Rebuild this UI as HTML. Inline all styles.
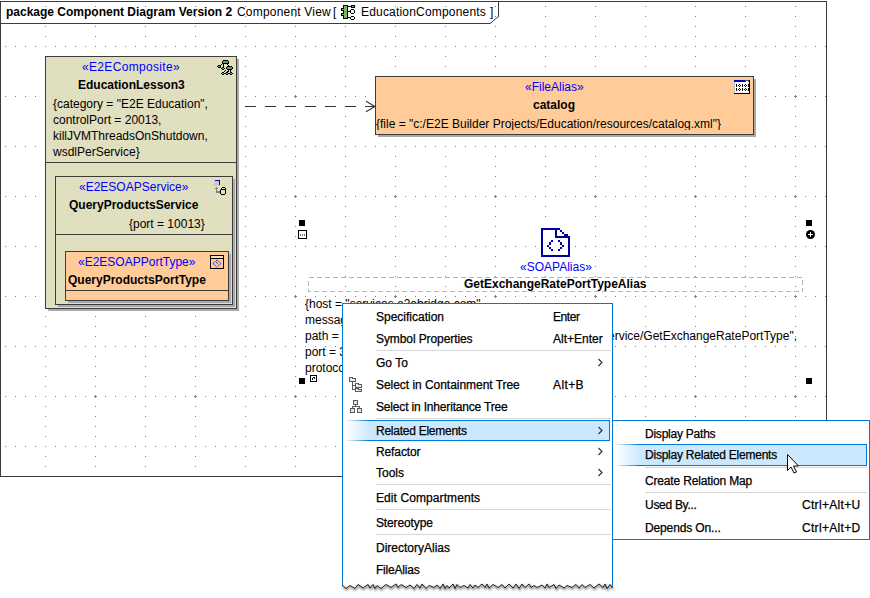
<!DOCTYPE html>
<html><head><meta charset="utf-8">
<style>
*{margin:0;padding:0;box-sizing:border-box}
html,body{width:870px;height:598px;overflow:hidden;background:#fff}
body{position:relative;font-family:"Liberation Sans",sans-serif;font-size:12px;color:#000}
.a{position:absolute}
.t{position:absolute;white-space:pre;line-height:16px;font-size:12px}
.b{font-weight:bold}
.st{color:#0000ff}
.sta{color:#0000ff}
.box{position:absolute;border:1px solid #3c3c3c}
.sh{position:absolute;background:#aaaaaa}
.beige{background:#e0dfbf}
.org{background:#ffcc99}
.hs{position:absolute;width:6px;height:6px;background:#000}
.menu{position:absolute;background:#fff;border:1px solid #0078d7}
.mi{position:absolute;white-space:pre;font-size:12px;line-height:16px;color:#000;-webkit-text-stroke:0.25px #000}
.sep{position:absolute;height:1px;background:#d7d7d7}
.hl{position:absolute;border-top:1px solid #0078d7;border-bottom:1px solid #0078d7;border-right:1px solid #0078d7;background:#cce8ff}
</style></head><body>

<!-- grid + frame -->
<svg class="a" style="left:0;top:0" width="870" height="598" shape-rendering="crispEdges">
<defs>
<pattern id="g1" patternUnits="userSpaceOnUse" x="0" y="0" width="50" height="50">
<rect x="5" y="46" width="1" height="1" fill="#808080"/>
<rect x="15" y="46" width="1" height="1" fill="#808080"/>
<rect x="25" y="46" width="1" height="1" fill="#808080"/>
<rect x="35" y="46" width="1" height="1" fill="#808080"/>
<rect x="45" y="46" width="1" height="1" fill="#808080"/>
<rect x="45" y="6" width="1" height="1" fill="#808080"/>
<rect x="45" y="16" width="1" height="1" fill="#808080"/>
<rect x="45" y="26" width="1" height="1" fill="#808080"/>
<rect x="45" y="36" width="1" height="1" fill="#808080"/>
</pattern>
<pattern id="g2" patternUnits="userSpaceOnUse" x="0" y="0" width="100" height="100">
<rect x="94" y="96" width="3" height="1" fill="#808080"/>
<rect x="95" y="95" width="1" height="3" fill="#808080"/>
</pattern>
</defs>
<rect x="1" y="2" width="825" height="474" fill="url(#g1)"/>
<rect x="1" y="24" width="825" height="452" fill="url(#g2)"/>
<rect x="0.5" y="1.5" width="826" height="475" fill="none" stroke="#3c3c3c" stroke-width="1"/>
<path d="M0 23.5 H490" fill="none" stroke="#3c3c3c" stroke-width="1"/>
<path d="M498.5 1 V16.5" fill="none" stroke="#3c3c3c" stroke-width="1"/>
<path d="M490 23.5 L498.5 16.5" fill="none" stroke="#3c3c3c" stroke-width="1" shape-rendering="auto"/>
<!-- dependency arrow -->
<path d="M245 106.5 H375" fill="none" stroke="#333" stroke-width="1" stroke-dasharray="10.6 9.4"/>
<path d="M366 101.2 L375 106.5 L366 111.8" fill="none" stroke="#333" stroke-width="1.1" stroke-linejoin="miter" shape-rendering="auto"/>
</svg>

<!-- header -->
<div class="t b" style="left:6px;top:4px">package Component Diagram Version 2</div>
<div class="t" style="left:237px;top:4px;letter-spacing:0.2px">Component View</div>
<div class="t" style="left:333px;top:4px">[</div>
<svg class="a" style="left:341px;top:5px" width="14" height="15" shape-rendering="crispEdges"><rect x="2" y="0" width="5" height="1" fill="#000"/><rect x="10" y="0" width="4" height="1" fill="#000"/><rect x="2" y="1" width="1" height="1" fill="#000"/><rect x="3" y="1" width="3" height="1" fill="#7cb65a"/><rect x="6" y="1" width="5" height="1" fill="#000"/><rect x="11" y="1" width="2" height="1" fill="#7cb65a"/><rect x="13" y="1" width="1" height="1" fill="#000"/><rect x="2" y="2" width="1" height="1" fill="#000"/><rect x="3" y="2" width="3" height="1" fill="#7cb65a"/><rect x="6" y="2" width="1" height="1" fill="#000"/><rect x="10" y="2" width="4" height="1" fill="#000"/><rect x="0" y="3" width="3" height="1" fill="#000"/><rect x="3" y="3" width="3" height="1" fill="#7cb65a"/><rect x="6" y="3" width="1" height="1" fill="#000"/><rect x="0" y="4" width="1" height="1" fill="#000"/><rect x="1" y="4" width="5" height="1" fill="#7cb65a"/><rect x="6" y="4" width="1" height="1" fill="#000"/><rect x="10" y="4" width="3" height="1" fill="#000"/><rect x="0" y="5" width="3" height="1" fill="#000"/><rect x="3" y="5" width="3" height="1" fill="#7cb65a"/><rect x="6" y="5" width="1" height="1" fill="#000"/><rect x="9" y="5" width="1" height="1" fill="#000"/><rect x="13" y="5" width="1" height="1" fill="#000"/><rect x="2" y="6" width="1" height="1" fill="#000"/><rect x="3" y="6" width="3" height="1" fill="#7cb65a"/><rect x="6" y="6" width="4" height="1" fill="#000"/><rect x="13" y="6" width="1" height="1" fill="#000"/><rect x="2" y="7" width="1" height="1" fill="#000"/><rect x="3" y="7" width="3" height="1" fill="#7cb65a"/><rect x="6" y="7" width="1" height="1" fill="#000"/><rect x="9" y="7" width="1" height="1" fill="#000"/><rect x="13" y="7" width="1" height="1" fill="#000"/><rect x="0" y="8" width="3" height="1" fill="#000"/><rect x="3" y="8" width="3" height="1" fill="#7cb65a"/><rect x="6" y="8" width="1" height="1" fill="#000"/><rect x="10" y="8" width="3" height="1" fill="#000"/><rect x="0" y="9" width="1" height="1" fill="#000"/><rect x="1" y="9" width="5" height="1" fill="#7cb65a"/><rect x="6" y="9" width="1" height="1" fill="#000"/><rect x="0" y="10" width="3" height="1" fill="#000"/><rect x="3" y="10" width="3" height="1" fill="#7cb65a"/><rect x="6" y="10" width="1" height="1" fill="#000"/><rect x="2" y="11" width="1" height="1" fill="#000"/><rect x="3" y="11" width="3" height="1" fill="#7cb65a"/><rect x="6" y="11" width="1" height="1" fill="#000"/><rect x="10" y="11" width="3" height="1" fill="#000"/><rect x="2" y="12" width="1" height="1" fill="#000"/><rect x="3" y="12" width="3" height="1" fill="#7cb65a"/><rect x="6" y="12" width="4" height="1" fill="#000"/><rect x="13" y="12" width="1" height="1" fill="#000"/><rect x="2" y="13" width="5" height="1" fill="#000"/><rect x="9" y="13" width="1" height="1" fill="#000"/><rect x="13" y="13" width="1" height="1" fill="#000"/><rect x="10" y="14" width="3" height="1" fill="#000"/></svg>
<div class="t" style="left:361px;top:4px;letter-spacing:0.19px">EducationComponents</div>
<div class="t" style="left:490px;top:4px">]</div>

<!-- EducationLesson3 composite -->
<div class="sh" style="left:48px;top:59px;width:191px;height:252px"></div>
<div class="box beige" style="left:45px;top:56px;width:192px;height:253px"></div>
<div class="a" style="left:46px;top:162px;width:190px;height:1px;background:#3c3c3c"></div>
<div class="t st" style="left:82px;top:59px;letter-spacing:0.33px">«E2EComposite»</div>
<div class="t b" style="left:78px;top:77px">EducationLesson3</div>
<div class="t" style="left:53px;top:96px">{category = "E2E Education",</div>
<div class="t" style="left:53px;top:112px">controlPort = 20013,</div>
<div class="t" style="left:53px;top:128px">killJVMThreadsOnShutdown,</div>
<div class="t" style="left:53px;top:144px">wsdlPerService}</div>
<svg class="a" style="left:214px;top:58px" width="22" height="17" shape-rendering="crispEdges"><rect x="9" y="2" width="5" height="1" fill="#000"/><rect x="8" y="3" width="1" height="1" fill="#000"/><rect x="9" y="3" width="5" height="1" fill="#5a9e6e"/><rect x="14" y="3" width="1" height="1" fill="#000"/><rect x="8" y="4" width="1" height="1" fill="#000"/><rect x="9" y="4" width="5" height="1" fill="#5a9e6e"/><rect x="14" y="4" width="1" height="1" fill="#000"/><rect x="8" y="5" width="7" height="1" fill="#000"/><rect x="7" y="6" width="1" height="1" fill="#000"/><rect x="9" y="6" width="1" height="1" fill="#000"/><rect x="13" y="6" width="1" height="1" fill="#000"/><rect x="4" y="7" width="3" height="1" fill="#000"/><rect x="9" y="7" width="1" height="1" fill="#000"/><rect x="14" y="7" width="1" height="1" fill="#000"/><rect x="3" y="8" width="1" height="1" fill="#000"/><rect x="4" y="8" width="2" height="1" fill="#5a9e6e"/><rect x="6" y="8" width="1" height="1" fill="#000"/><rect x="9" y="8" width="1" height="1" fill="#000"/><rect x="13" y="8" width="5" height="1" fill="#000"/><rect x="4" y="9" width="3" height="1" fill="#000"/><rect x="8" y="9" width="2" height="1" fill="#000"/><rect x="12" y="9" width="1" height="1" fill="#000"/><rect x="13" y="9" width="5" height="1" fill="#5a9e6e"/><rect x="18" y="9" width="1" height="1" fill="#000"/><rect x="7" y="10" width="1" height="1" fill="#000"/><rect x="8" y="10" width="2" height="1" fill="#5a9e6e"/><rect x="10" y="10" width="1" height="1" fill="#000"/><rect x="12" y="10" width="1" height="1" fill="#000"/><rect x="13" y="10" width="5" height="1" fill="#5a9e6e"/><rect x="18" y="10" width="1" height="1" fill="#000"/><rect x="8" y="11" width="2" height="1" fill="#000"/><rect x="13" y="11" width="5" height="1" fill="#000"/><rect x="11" y="12" width="1" height="1" fill="#000"/><rect x="14" y="12" width="1" height="1" fill="#000"/><rect x="16" y="12" width="1" height="1" fill="#000"/><rect x="10" y="13" width="1" height="1" fill="#000"/><rect x="13" y="13" width="2" height="1" fill="#000"/><rect x="16" y="13" width="1" height="1" fill="#000"/><rect x="8" y="14" width="2" height="1" fill="#000"/><rect x="12" y="14" width="2" height="1" fill="#000"/><rect x="16" y="14" width="2" height="1" fill="#000"/><rect x="7" y="15" width="1" height="1" fill="#000"/><rect x="8" y="15" width="2" height="1" fill="#5a9e6e"/><rect x="10" y="15" width="2" height="1" fill="#000"/><rect x="12" y="15" width="2" height="1" fill="#5a9e6e"/><rect x="14" y="15" width="2" height="1" fill="#000"/><rect x="16" y="15" width="2" height="1" fill="#5a9e6e"/><rect x="18" y="15" width="1" height="1" fill="#000"/><rect x="8" y="16" width="2" height="1" fill="#000"/><rect x="12" y="16" width="2" height="1" fill="#000"/><rect x="16" y="16" width="2" height="1" fill="#000"/></svg>

<!-- QueryProductsService -->
<div class="sh" style="left:58px;top:179px;width:177px;height:128px"></div>
<div class="box beige" style="left:55px;top:176px;width:178px;height:129px"></div>
<div class="a" style="left:56px;top:234px;width:176px;height:1px;background:#3c3c3c"></div>
<div class="t st" style="left:79px;top:179px">«E2ESOAPService»</div>
<div class="t b" style="left:69px;top:197px">QueryProductsService</div>
<div class="t" style="left:129px;top:216px">{port = 10013}</div>
<svg class="a" style="left:210px;top:176px" width="22" height="19" shape-rendering="crispEdges"><rect x="5" y="4" width="5" height="1" fill="#0000d0"/><rect x="4" y="5" width="5" height="1" fill="#c8cad0"/><rect x="9" y="5" width="1" height="1" fill="#0000d0"/><rect x="4" y="6" width="5" height="1" fill="#c8cad0"/><rect x="9" y="6" width="1" height="1" fill="#0000d0"/><rect x="4" y="7" width="5" height="1" fill="#c8cad0"/><rect x="9" y="7" width="1" height="1" fill="#0000d0"/><rect x="4" y="8" width="5" height="1" fill="#c8cad0"/><rect x="9" y="8" width="1" height="1" fill="#0000d0"/><rect x="4" y="9" width="6" height="1" fill="#c8cad0"/><rect x="6" y="11" width="1" height="1" fill="#808080"/><rect x="12" y="11" width="3" height="1" fill="#000"/><rect x="5" y="12" width="3" height="1" fill="#808080"/><rect x="11" y="12" width="1" height="1" fill="#000"/><rect x="15" y="12" width="1" height="1" fill="#000"/><rect x="6" y="13" width="1" height="1" fill="#808080"/><rect x="10" y="13" width="1" height="1" fill="#808080"/><rect x="11" y="13" width="5" height="1" fill="#000"/><rect x="6" y="14" width="1" height="1" fill="#808080"/><rect x="10" y="14" width="1" height="1" fill="#000"/><rect x="15" y="14" width="1" height="1" fill="#000"/><rect x="6" y="15" width="4" height="1" fill="#808080"/><rect x="10" y="15" width="1" height="1" fill="#000"/><rect x="15" y="15" width="1" height="1" fill="#000"/><rect x="6" y="16" width="4" height="1" fill="#808080"/><rect x="10" y="16" width="1" height="1" fill="#000"/><rect x="15" y="16" width="1" height="1" fill="#000"/><rect x="10" y="17" width="1" height="1" fill="#000"/><rect x="15" y="17" width="1" height="1" fill="#000"/><rect x="11" y="18" width="4" height="1" fill="#000"/></svg>

<!-- QueryProductsPortType -->
<div class="sh" style="left:68px;top:254px;width:163px;height:49px"></div>
<div class="box org" style="left:65px;top:251px;width:164px;height:50px"></div>
<div class="a" style="left:66px;top:290px;width:162px;height:1px;background:#3c3c3c"></div>
<div class="t st" style="left:78px;top:254px">«E2ESOAPPortType»</div>
<div class="t b" style="left:68px;top:272px">QueryProductsPortType</div>
<svg class="a" style="left:210px;top:255px" width="14" height="14" viewBox="0 0 14 14" shape-rendering="crispEdges">
<rect x="0" y="0" width="14" height="14" fill="#000"/>
<rect x="1" y="1" width="12" height="2" fill="#ffe0b0"/>
<rect x="1" y="4" width="12" height="9" fill="#ffcc99"/>
<path d="M7 5 L11 8.5 L7 12 L3 8.5 Z" fill="none" stroke="#4040ff" stroke-width="1.1" stroke-dasharray="1.2 0.8" shape-rendering="auto"/>
<rect x="6" y="7" width="1" height="1" fill="#333"/><rect x="7" y="8" width="1" height="1" fill="#7a7a30"/>
</svg>

<!-- FileAlias catalog -->
<div class="sh" style="left:378px;top:79px;width:378px;height:58px"></div>
<div class="box org" style="left:375px;top:76px;width:379px;height:59px"></div>
<div class="t sta" style="left:525px;top:79px">«FileAlias»</div>
<div class="t b" style="left:533px;top:97px">catalog</div>
<div class="t" style="left:376px;top:116px;height:14px;overflow:hidden">{file = "c:/E2E Builder Projects/Education/resources/catalog.xml"}</div>
<svg class="a" style="left:734px;top:80px" width="16" height="14" shape-rendering="crispEdges"><rect x="0" y="0" width="11" height="1" fill="#0000c8"/><rect x="11" y="0" width="4" height="1" fill="#505060"/><rect x="15" y="0" width="1" height="1" fill="#000"/><rect x="0" y="1" width="11" height="1" fill="#0000c8"/><rect x="11" y="1" width="1" height="1" fill="#505060"/><rect x="12" y="1" width="2" height="1" fill="#ffffff"/><rect x="14" y="1" width="1" height="1" fill="#505060"/><rect x="15" y="1" width="1" height="1" fill="#000"/><rect x="0" y="2" width="1" height="1" fill="#c0c0c8"/><rect x="1" y="2" width="14" height="1" fill="#ffffff"/><rect x="15" y="2" width="1" height="1" fill="#000"/><rect x="0" y="3" width="1" height="1" fill="#c0c0c8"/><rect x="1" y="3" width="14" height="1" fill="#ffffff"/><rect x="15" y="3" width="1" height="1" fill="#000"/><rect x="0" y="4" width="1" height="1" fill="#c0c0c8"/><rect x="1" y="4" width="1" height="1" fill="#ffffff"/><rect x="2" y="4" width="1" height="1" fill="#000"/><rect x="3" y="4" width="2" height="1" fill="#ffffff"/><rect x="5" y="4" width="1" height="1" fill="#000"/><rect x="6" y="4" width="2" height="1" fill="#ffffff"/><rect x="8" y="4" width="1" height="1" fill="#000"/><rect x="9" y="4" width="2" height="1" fill="#ffffff"/><rect x="11" y="4" width="1" height="1" fill="#000"/><rect x="12" y="4" width="2" height="1" fill="#ffffff"/><rect x="14" y="4" width="2" height="1" fill="#000"/><rect x="0" y="5" width="1" height="1" fill="#c0c0c8"/><rect x="1" y="5" width="1" height="1" fill="#ffffff"/><rect x="2" y="5" width="1" height="1" fill="#000"/><rect x="3" y="5" width="1" height="1" fill="#ffffff"/><rect x="4" y="5" width="1" height="1" fill="#000"/><rect x="5" y="5" width="1" height="1" fill="#ffffff"/><rect x="6" y="5" width="1" height="1" fill="#000"/><rect x="7" y="5" width="1" height="1" fill="#ffffff"/><rect x="8" y="5" width="1" height="1" fill="#000"/><rect x="9" y="5" width="1" height="1" fill="#ffffff"/><rect x="10" y="5" width="1" height="1" fill="#000"/><rect x="11" y="5" width="1" height="1" fill="#ffffff"/><rect x="12" y="5" width="1" height="1" fill="#000"/><rect x="13" y="5" width="1" height="1" fill="#ffffff"/><rect x="14" y="5" width="2" height="1" fill="#000"/><rect x="0" y="6" width="1" height="1" fill="#c0c0c8"/><rect x="1" y="6" width="1" height="1" fill="#ffffff"/><rect x="2" y="6" width="1" height="1" fill="#000"/><rect x="3" y="6" width="2" height="1" fill="#ffffff"/><rect x="5" y="6" width="1" height="1" fill="#000"/><rect x="6" y="6" width="2" height="1" fill="#ffffff"/><rect x="8" y="6" width="1" height="1" fill="#000"/><rect x="9" y="6" width="2" height="1" fill="#ffffff"/><rect x="11" y="6" width="1" height="1" fill="#000"/><rect x="12" y="6" width="2" height="1" fill="#ffffff"/><rect x="14" y="6" width="2" height="1" fill="#000"/><rect x="0" y="7" width="1" height="1" fill="#c0c0c8"/><rect x="1" y="7" width="14" height="1" fill="#ffffff"/><rect x="15" y="7" width="1" height="1" fill="#000"/><rect x="0" y="8" width="1" height="1" fill="#c0c0c8"/><rect x="1" y="8" width="1" height="1" fill="#ffffff"/><rect x="2" y="8" width="1" height="1" fill="#000"/><rect x="3" y="8" width="2" height="1" fill="#ffffff"/><rect x="5" y="8" width="1" height="1" fill="#000"/><rect x="6" y="8" width="2" height="1" fill="#ffffff"/><rect x="8" y="8" width="1" height="1" fill="#000"/><rect x="9" y="8" width="2" height="1" fill="#ffffff"/><rect x="11" y="8" width="1" height="1" fill="#000"/><rect x="12" y="8" width="2" height="1" fill="#ffffff"/><rect x="14" y="8" width="2" height="1" fill="#000"/><rect x="0" y="9" width="1" height="1" fill="#c0c0c8"/><rect x="1" y="9" width="1" height="1" fill="#ffffff"/><rect x="2" y="9" width="1" height="1" fill="#000"/><rect x="3" y="9" width="1" height="1" fill="#ffffff"/><rect x="4" y="9" width="1" height="1" fill="#000"/><rect x="5" y="9" width="1" height="1" fill="#ffffff"/><rect x="6" y="9" width="1" height="1" fill="#000"/><rect x="7" y="9" width="1" height="1" fill="#ffffff"/><rect x="8" y="9" width="1" height="1" fill="#000"/><rect x="9" y="9" width="1" height="1" fill="#ffffff"/><rect x="10" y="9" width="1" height="1" fill="#000"/><rect x="11" y="9" width="1" height="1" fill="#ffffff"/><rect x="12" y="9" width="1" height="1" fill="#000"/><rect x="13" y="9" width="1" height="1" fill="#ffffff"/><rect x="14" y="9" width="2" height="1" fill="#000"/><rect x="0" y="10" width="1" height="1" fill="#c0c0c8"/><rect x="1" y="10" width="1" height="1" fill="#ffffff"/><rect x="2" y="10" width="1" height="1" fill="#000"/><rect x="3" y="10" width="2" height="1" fill="#ffffff"/><rect x="5" y="10" width="1" height="1" fill="#000"/><rect x="6" y="10" width="2" height="1" fill="#ffffff"/><rect x="8" y="10" width="1" height="1" fill="#000"/><rect x="9" y="10" width="2" height="1" fill="#ffffff"/><rect x="11" y="10" width="1" height="1" fill="#000"/><rect x="12" y="10" width="2" height="1" fill="#ffffff"/><rect x="14" y="10" width="2" height="1" fill="#000"/><rect x="0" y="11" width="1" height="1" fill="#c0c0c8"/><rect x="1" y="11" width="14" height="1" fill="#ffffff"/><rect x="15" y="11" width="1" height="1" fill="#000"/><rect x="0" y="12" width="1" height="1" fill="#c0c0c8"/><rect x="1" y="12" width="14" height="1" fill="#ffffff"/><rect x="15" y="12" width="1" height="1" fill="#000"/><rect x="0" y="13" width="16" height="1" fill="#000"/></svg>

<!-- SOAPAlias element -->
<div class="a" style="left:539px;top:223px;width:33px;height:35px;background:#fff"></div>
<svg class="a" style="left:541px;top:228px" width="29" height="29" viewBox="0 0 29 29" shape-rendering="crispEdges">
<path d="M0 0 H19 L29 9 V29 H0 Z" fill="#fff"/>
<g fill="#0000a0">
<rect x="0" y="0" width="19" height="2"/>
<rect x="0" y="0" width="2" height="29"/>
<rect x="0" y="27" width="29" height="2"/>
<rect x="27" y="9" width="2" height="20"/>
<rect x="14" y="0" width="2" height="10"/>
<rect x="14" y="8" width="15" height="2"/>
<rect x="19" y="2" width="2" height="2"/>
<rect x="21" y="4" width="2" height="2"/>
<rect x="23" y="6" width="4" height="2"/>
<rect x="25" y="7" width="2" height="2"/>
<rect x="10" y="12" width="2" height="2"/><rect x="8" y="14" width="2" height="3"/><rect x="6" y="17" width="2" height="2"/><rect x="8" y="19" width="2" height="2"/><rect x="10" y="21" width="2" height="2"/>
<rect x="17" y="12" width="2" height="2"/><rect x="19" y="14" width="2" height="3"/><rect x="21" y="17" width="2" height="2"/><rect x="19" y="19" width="2" height="2"/><rect x="17" y="21" width="2" height="2"/>
</g>
</svg>
<div class="t sta" style="left:520px;top:259px">«SOAPAlias»</div>
<svg class="a" style="left:308px;top:277px" width="496" height="15" shape-rendering="crispEdges">
<rect x="0.5" y="0.5" width="494" height="14" fill="none" stroke="#b4b4b4" stroke-width="1" stroke-dasharray="5 3"/>
</svg>
<div class="t b" style="left:464px;top:276px">GetExchangeRatePortTypeAlias</div>
<div class="t" style="left:305px;top:296px">{host = "services.e2ebridge.com",</div>
<div class="t" style="left:305px;top:312px">messageStyle = "document",</div>
<div class="t" style="left:305px;top:328px">path = "</div>
<div class="t" style="left:615px;top:328px;width:182px;text-align:right;overflow:visible"><span style="position:absolute;right:0">Service/GetExchangeRatePortType",</span></div>
<div class="t" style="left:305px;top:344px">port = 3000,</div>
<div class="t" style="left:305px;top:360px">protocol = "soap"}</div>

<!-- selection handles -->
<div class="hs" style="left:299px;top:220px"></div>
<div class="hs" style="left:806px;top:220px"></div>
<div class="hs" style="left:299px;top:378px"></div>
<div class="hs" style="left:806px;top:378px"></div>
<svg class="a" style="left:298px;top:230px" width="9" height="9" shape-rendering="crispEdges">
<rect x="0" y="0" width="9" height="9" fill="#000"/><rect x="1" y="1" width="7" height="7" fill="#fff"/>
<rect x="2" y="4" width="1" height="2" fill="#777"/><rect x="4" y="4" width="1" height="2" fill="#777"/><rect x="6" y="4" width="1" height="2" fill="#777"/>
</svg>
<svg class="a" style="left:806px;top:230px" width="9" height="9">
<circle cx="4.5" cy="4.5" r="4.5" fill="#000"/>
<rect x="2" y="4" width="5" height="1" fill="#fff"/><rect x="4" y="2" width="1" height="5" fill="#fff"/>
</svg>
<svg class="a" style="left:310px;top:375px" width="7" height="7" shape-rendering="crispEdges">
<rect x="0" y="0" width="7" height="7" fill="#000"/><rect x="1" y="1" width="5" height="5" fill="#fff"/>
<rect x="2" y="3" width="1" height="2" fill="#000"/><rect x="3" y="2" width="2" height="1" fill="#000"/><rect x="4" y="3" width="1" height="1" fill="#000"/>
</svg>

<!-- main context menu -->
<div class="menu" style="left:342px;top:303px;width:271px;height:290px;border-bottom:none"></div>
<div class="mi" style="left:376px;top:309px">Specification</div>
<div class="mi" style="left:553px;top:309px;letter-spacing:-0.425px">Enter</div>
<div class="mi" style="left:376px;top:331px;letter-spacing:-0.094px">Symbol Properties</div>
<div class="mi" style="left:553px;top:331px">Alt+Enter</div>
<div class="sep" style="left:376px;top:350px;width:235px"></div>
<div class="mi" style="left:376px;top:355px">Go To</div>
<div class="mi" style="left:376px;top:377px;letter-spacing:-0.040px">Select in Containment Tree</div>
<div class="mi" style="left:553px;top:377px;letter-spacing:0.400px">Alt+B</div>
<div class="mi" style="left:376px;top:399px;letter-spacing:-0.172px">Select in Inheritance Tree</div>
<div class="sep" style="left:376px;top:418px;width:235px"></div>
<div class="a" style="left:343px;top:420px;width:267px;height:21px;background:linear-gradient(to right,#fff 2px,#cce8ff 28px)"></div>
<div class="a" style="left:343px;top:420px;width:267px;height:1px;background:linear-gradient(to right,#fff 2px,#0078d7 26px)"></div>
<div class="a" style="left:343px;top:440px;width:267px;height:1px;background:linear-gradient(to right,#fff 2px,#0078d7 26px)"></div>
<div class="a" style="left:609px;top:420px;width:1px;height:21px;background:#0078d7"></div>
<div class="mi" style="left:376px;top:423px;letter-spacing:-0.253px">Related Elements</div>
<div class="mi" style="left:376px;top:444px;letter-spacing:-0.114px">Refactor</div>
<div class="mi" style="left:376px;top:465px">Tools</div>
<div class="sep" style="left:376px;top:484px;width:235px"></div>
<div class="mi" style="left:376px;top:490px;letter-spacing:0.088px">Edit Compartments</div>
<div class="sep" style="left:376px;top:509px;width:235px"></div>
<div class="mi" style="left:376px;top:515px;letter-spacing:-0.133px">Stereotype</div>
<div class="sep" style="left:376px;top:534px;width:235px"></div>
<div class="mi" style="left:376px;top:540px">DirectoryAlias</div>
<div class="mi" style="left:376px;top:562px;letter-spacing:-0.213px">FileAlias</div>
<svg class="a" style="left:590px;top:350px" width="20" height="130">
<g fill="none" stroke="#333" stroke-width="1.2">
<path d="M598.5 359 L602 362.5 L598.5 366" transform="translate(-590,-350)"/>
<path d="M598.5 427 L602 430.5 L598.5 434" transform="translate(-590,-350)"/>
<path d="M598.5 448 L602 451.5 L598.5 455" transform="translate(-590,-350)"/>
<path d="M598.5 469 L602 472.5 L598.5 476" transform="translate(-590,-350)"/>
</g>
</svg>
<!-- menu icons -->
<svg class="a" style="left:349px;top:377px" width="14" height="15" shape-rendering="crispEdges"><rect x="0" y="0" width="4" height="1" fill="#5a5a5a"/><rect x="0" y="1" width="1" height="1" fill="#5a5a5a"/><rect x="1" y="1" width="2" height="1" fill="#ececec"/><rect x="3" y="1" width="4" height="1" fill="#5a5a5a"/><rect x="0" y="2" width="1" height="1" fill="#5a5a5a"/><rect x="1" y="2" width="5" height="1" fill="#ececec"/><rect x="6" y="2" width="1" height="1" fill="#5a5a5a"/><rect x="0" y="3" width="1" height="1" fill="#5a5a5a"/><rect x="1" y="3" width="5" height="1" fill="#ececec"/><rect x="6" y="3" width="1" height="1" fill="#5a5a5a"/><rect x="0" y="4" width="7" height="1" fill="#5a5a5a"/><rect x="3" y="5" width="1" height="1" fill="#5a5a5a"/><rect x="3" y="6" width="1" height="1" fill="#5a5a5a"/><rect x="6" y="6" width="4" height="1" fill="#5a5a5a"/><rect x="3" y="7" width="1" height="1" fill="#5a5a5a"/><rect x="6" y="7" width="1" height="1" fill="#5a5a5a"/><rect x="7" y="7" width="2" height="1" fill="#ececec"/><rect x="9" y="7" width="4" height="1" fill="#5a5a5a"/><rect x="3" y="8" width="4" height="1" fill="#5a5a5a"/><rect x="7" y="8" width="5" height="1" fill="#ececec"/><rect x="12" y="8" width="1" height="1" fill="#5a5a5a"/><rect x="3" y="9" width="1" height="1" fill="#5a5a5a"/><rect x="6" y="9" width="1" height="1" fill="#5a5a5a"/><rect x="7" y="9" width="5" height="1" fill="#ececec"/><rect x="12" y="9" width="1" height="1" fill="#5a5a5a"/><rect x="3" y="10" width="1" height="1" fill="#5a5a5a"/><rect x="6" y="10" width="7" height="1" fill="#5a5a5a"/><rect x="3" y="11" width="1" height="1" fill="#5a5a5a"/><rect x="6" y="11" width="4" height="1" fill="#5a5a5a"/><rect x="3" y="12" width="4" height="1" fill="#5a5a5a"/><rect x="7" y="12" width="2" height="1" fill="#ececec"/><rect x="9" y="12" width="4" height="1" fill="#5a5a5a"/><rect x="6" y="13" width="1" height="1" fill="#5a5a5a"/><rect x="7" y="13" width="5" height="1" fill="#ececec"/><rect x="12" y="13" width="1" height="1" fill="#5a5a5a"/><rect x="6" y="14" width="7" height="1" fill="#5a5a5a"/></svg>
<svg class="a" style="left:350px;top:400px" width="13" height="13" shape-rendering="crispEdges"><rect x="3" y="0" width="5" height="1" fill="#5a5a5a"/><rect x="3" y="1" width="1" height="1" fill="#5a5a5a"/><rect x="4" y="1" width="3" height="1" fill="#e4e4e4"/><rect x="7" y="1" width="1" height="1" fill="#5a5a5a"/><rect x="3" y="2" width="1" height="1" fill="#5a5a5a"/><rect x="4" y="2" width="3" height="1" fill="#e4e4e4"/><rect x="7" y="2" width="1" height="1" fill="#5a5a5a"/><rect x="3" y="3" width="1" height="1" fill="#5a5a5a"/><rect x="4" y="3" width="3" height="1" fill="#e4e4e4"/><rect x="7" y="3" width="1" height="1" fill="#5a5a5a"/><rect x="3" y="4" width="5" height="1" fill="#5a5a5a"/><rect x="5" y="5" width="1" height="1" fill="#5a5a5a"/><rect x="2" y="6" width="8" height="1" fill="#5a5a5a"/><rect x="2" y="7" width="1" height="1" fill="#5a5a5a"/><rect x="9" y="7" width="1" height="1" fill="#5a5a5a"/><rect x="0" y="8" width="5" height="1" fill="#5a5a5a"/><rect x="7" y="8" width="5" height="1" fill="#5a5a5a"/><rect x="0" y="9" width="1" height="1" fill="#5a5a5a"/><rect x="1" y="9" width="3" height="1" fill="#e4e4e4"/><rect x="4" y="9" width="1" height="1" fill="#5a5a5a"/><rect x="7" y="9" width="1" height="1" fill="#5a5a5a"/><rect x="8" y="9" width="3" height="1" fill="#e4e4e4"/><rect x="11" y="9" width="1" height="1" fill="#5a5a5a"/><rect x="0" y="10" width="1" height="1" fill="#5a5a5a"/><rect x="1" y="10" width="3" height="1" fill="#e4e4e4"/><rect x="4" y="10" width="1" height="1" fill="#5a5a5a"/><rect x="7" y="10" width="1" height="1" fill="#5a5a5a"/><rect x="8" y="10" width="3" height="1" fill="#e4e4e4"/><rect x="11" y="10" width="1" height="1" fill="#5a5a5a"/><rect x="0" y="11" width="1" height="1" fill="#5a5a5a"/><rect x="1" y="11" width="3" height="1" fill="#e4e4e4"/><rect x="4" y="11" width="1" height="1" fill="#5a5a5a"/><rect x="7" y="11" width="1" height="1" fill="#5a5a5a"/><rect x="8" y="11" width="3" height="1" fill="#e4e4e4"/><rect x="11" y="11" width="1" height="1" fill="#5a5a5a"/><rect x="0" y="12" width="5" height="1" fill="#5a5a5a"/><rect x="7" y="12" width="5" height="1" fill="#5a5a5a"/></svg>
<!-- torn bottom -->
<svg class="a" style="left:338px;top:575px" width="282" height="23">
<defs><filter id="bl" x="-5%" y="-50%" width="110%" height="200%"><feGaussianBlur stdDeviation="0.8"/></filter></defs>
<path d="M4.0 10.0 L8.0 13.5 L12.0 10.5 L17.0 13.5 L20.0 9.5 L25.0 13.0 L30.0 9.5 L32.0 13.0 L35.0 9.5 L37.0 13.5 L39.0 10.5 L43.0 13.5 L48.0 9.5 L53.0 12.5 L58.0 9.0 L60.0 12.5 L63.0 9.5 L68.0 12.5 L72.0 10.0 L76.0 13.5 L79.0 9.5 L82.0 13.0 L84.0 9.0 L88.0 13.5 L91.0 10.5 L96.0 12.5 L99.0 10.0 L102.0 13.5 L105.0 9.0 L107.0 13.5 L109.0 10.5 L111.0 13.0 L115.0 9.0 L117.0 13.5 L119.0 9.5 L122.0 12.5 L126.0 10.5 L130.0 13.0 L132.0 9.5 L135.0 13.0 L137.0 10.0 L140.0 12.5 L144.0 9.0 L147.0 12.5 L149.0 9.0 L151.0 13.0 L155.0 9.5 L160.0 12.5 L164.0 9.5 L167.0 13.0 L171.0 9.0 L175.0 13.0 L178.0 9.0 L181.0 13.5 L184.0 9.0 L187.0 12.5 L191.0 9.0 L193.0 12.5 L196.0 10.5 L199.0 12.5 L204.0 10.0 L207.0 13.0 L209.0 9.0 L211.0 12.5 L216.0 9.5 L218.0 13.5 L221.0 10.0 L226.0 13.0 L229.0 10.5 L234.0 12.5 L238.0 9.5 L241.0 13.0 L244.0 9.5 L247.0 12.5 L252.0 9.5 L256.0 13.0 L261.0 9.0 L265.0 12.5 L267.0 9.0 L269.0 13.5 L272.0 9.5 L274.5 13.0 L282 14 L282 23 L0 23 L0 10 Z" fill="#fff"/>
<path d="M4.0 10.0 L8.0 13.5 L12.0 10.5 L17.0 13.5 L20.0 9.5 L25.0 13.0 L30.0 9.5 L32.0 13.0 L35.0 9.5 L37.0 13.5 L39.0 10.5 L43.0 13.5 L48.0 9.5 L53.0 12.5 L58.0 9.0 L60.0 12.5 L63.0 9.5 L68.0 12.5 L72.0 10.0 L76.0 13.5 L79.0 9.5 L82.0 13.0 L84.0 9.0 L88.0 13.5 L91.0 10.5 L96.0 12.5 L99.0 10.0 L102.0 13.5 L105.0 9.0 L107.0 13.5 L109.0 10.5 L111.0 13.0 L115.0 9.0 L117.0 13.5 L119.0 9.5 L122.0 12.5 L126.0 10.5 L130.0 13.0 L132.0 9.5 L135.0 13.0 L137.0 10.0 L140.0 12.5 L144.0 9.0 L147.0 12.5 L149.0 9.0 L151.0 13.0 L155.0 9.5 L160.0 12.5 L164.0 9.5 L167.0 13.0 L171.0 9.0 L175.0 13.0 L178.0 9.0 L181.0 13.5 L184.0 9.0 L187.0 12.5 L191.0 9.0 L193.0 12.5 L196.0 10.5 L199.0 12.5 L204.0 10.0 L207.0 13.0 L209.0 9.0 L211.0 12.5 L216.0 9.5 L218.0 13.5 L221.0 10.0 L226.0 13.0 L229.0 10.5 L234.0 12.5 L238.0 9.5 L241.0 13.0 L244.0 9.5 L247.0 12.5 L252.0 9.5 L256.0 13.0 L261.0 9.0 L265.0 12.5 L267.0 9.0 L269.0 13.5 L272.0 9.5 L274.5 13.0" fill="none" stroke="#777" stroke-width="1.5" transform="translate(0.5,1.3)" filter="url(#bl)"/>
<path d="M4.0 10.0 L8.0 13.5 L12.0 10.5 L17.0 13.5 L20.0 9.5 L25.0 13.0 L30.0 9.5 L32.0 13.0 L35.0 9.5 L37.0 13.5 L39.0 10.5 L43.0 13.5 L48.0 9.5 L53.0 12.5 L58.0 9.0 L60.0 12.5 L63.0 9.5 L68.0 12.5 L72.0 10.0 L76.0 13.5 L79.0 9.5 L82.0 13.0 L84.0 9.0 L88.0 13.5 L91.0 10.5 L96.0 12.5 L99.0 10.0 L102.0 13.5 L105.0 9.0 L107.0 13.5 L109.0 10.5 L111.0 13.0 L115.0 9.0 L117.0 13.5 L119.0 9.5 L122.0 12.5 L126.0 10.5 L130.0 13.0 L132.0 9.5 L135.0 13.0 L137.0 10.0 L140.0 12.5 L144.0 9.0 L147.0 12.5 L149.0 9.0 L151.0 13.0 L155.0 9.5 L160.0 12.5 L164.0 9.5 L167.0 13.0 L171.0 9.0 L175.0 13.0 L178.0 9.0 L181.0 13.5 L184.0 9.0 L187.0 12.5 L191.0 9.0 L193.0 12.5 L196.0 10.5 L199.0 12.5 L204.0 10.0 L207.0 13.0 L209.0 9.0 L211.0 12.5 L216.0 9.5 L218.0 13.5 L221.0 10.0 L226.0 13.0 L229.0 10.5 L234.0 12.5 L238.0 9.5 L241.0 13.0 L244.0 9.5 L247.0 12.5 L252.0 9.5 L256.0 13.0 L261.0 9.0 L265.0 12.5 L267.0 9.0 L269.0 13.5 L272.0 9.5 L274.5 13.0" fill="none" stroke="#222" stroke-width="1"/>
</svg>

<!-- submenu -->
<div class="menu" style="left:612px;top:420px;width:258px;height:120px"></div>
<div class="mi" style="left:645px;top:426px;letter-spacing:-0.233px">Display Paths</div>
<div class="a" style="left:613px;top:444px;width:254px;height:22px;background:linear-gradient(to right,#fff 2px,#cce8ff 28px)"></div>
<div class="a" style="left:613px;top:444px;width:254px;height:1px;background:linear-gradient(to right,#fff 2px,#0078d7 26px)"></div>
<div class="a" style="left:613px;top:465px;width:254px;height:1px;background:linear-gradient(to right,#fff 2px,#0078d7 26px)"></div>
<div class="a" style="left:866px;top:444px;width:1px;height:22px;background:#0078d7"></div>
<div class="mi" style="left:645px;top:447px;letter-spacing:-0.226px">Display Related Elements</div>
<div class="sep" style="left:645px;top:467px;width:222px"></div>
<div class="mi" style="left:645px;top:473px;letter-spacing:-0.161px">Create Relation Map</div>
<div class="sep" style="left:645px;top:492px;width:222px"></div>
<div class="mi" style="left:645px;top:497px;letter-spacing:-0.289px">Used By...</div>
<div class="mi" style="left:802px;top:497px;letter-spacing:0.311px">Ctrl+Alt+U</div>
<div class="mi" style="left:645px;top:520px;letter-spacing:-0.133px">Depends On...</div>
<div class="mi" style="left:802px;top:520px;letter-spacing:0.311px">Ctrl+Alt+D</div>

<!-- cursor -->
<svg class="a" style="left:786px;top:453px" width="14" height="21">
<path d="M1.5 1.5 V17.5 L5 14 L8 20 L10.5 19 L7.5 13 H12.5 Z" fill="#fff" stroke="#000" stroke-width="1" stroke-linejoin="miter"/>
</svg>

</body></html>
